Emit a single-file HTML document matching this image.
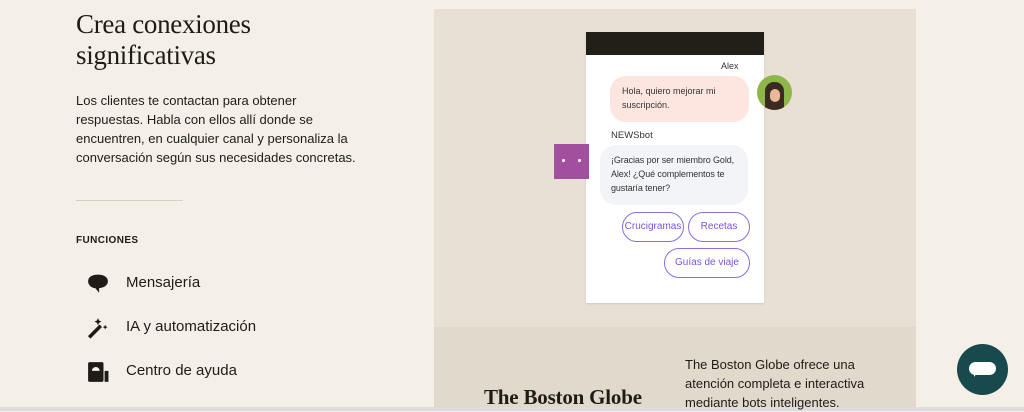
<!DOCTYPE html><html><head><style>
*{margin:0;padding:0;box-sizing:border-box}
body{width:1024px;height:411px;overflow:hidden;background:#f5f0e7;font-family:"Liberation Sans",sans-serif;color:#1f1c17;position:relative}
.a{position:absolute}
h1{font-family:"Liberation Serif",serif;font-weight:400;font-size:27px;line-height:31px;left:76px;top:9px;letter-spacing:-.3px}
.p{left:76px;top:91px;width:290px;font-size:13px;line-height:19px}
.it{left:126px;font-size:15px}
.bub{font-size:9px;line-height:14px;color:#333;border-radius:16px;padding:0 12px}
.btn{border:1.3px solid #8a6ee0;color:#7a55d8;border-radius:16px;font-size:10px;text-align:center;height:30px;line-height:28px}
</style></head><body>
<h1 class="a">Crea conexiones<br>significativas</h1>
<div class="a p">Los clientes te contactan para obtener respuestas. Habla con ellos allí donde se encuentren, en cualquier canal y personaliza la conversación según sus necesidades concretas.</div>
<div class="a" style="left:76px;top:200px;width:107px;height:1px;background:#d8d0c2"></div>
<div class="a" style="left:76px;top:235px;font-size:10px;font-weight:700;letter-spacing:.4px">FUNCIONES</div>
<svg class="a" style="left:87px;top:273px" width="22" height="22" viewBox="0 0 20 20"><path d="M10 1.5C4 1.5 1 4 1 7.5s3 6 6.5 6.3L11 18v-4.2c5-.5 8-3 8-6.3s-3-6-9-6z" fill="#1f1c17"/></svg>
<div class="a it" style="top:274px">Mensajería</div>
<svg class="a" style="left:87px;top:317px" width="22" height="22" viewBox="0 0 20 20"><path d="M2 18.5L12.5 8" stroke="#1f1c17" stroke-width="3.2"/><path d="M10 1l1 2.2 2.2 1-2.2 1L10 7.5l-1-2.3-2.2-1 2.2-1zM16.5 7l.7 1.5 1.5.7-1.5.7-.7 1.5-.7-1.5-1.5-.7 1.5-.7z" fill="#1f1c17"/></svg>
<div class="a it" style="top:318px">IA y automatización</div>
<svg class="a" style="left:87px;top:361px" width="22" height="22" viewBox="0 0 20 20"><rect x="1" y="1" width="14" height="18" rx="1.5" fill="#1f1c17"/><rect x="16" y="9" width="3.5" height="10" rx=".5" fill="#1f1c17"/><path d="M4.5 9a3.5 3.5 0 017 0z" fill="#f5f0e7"/></svg>
<div class="a it" style="top:362px">Centro de ayuda</div>

<div class="a" style="left:434px;top:9px;width:482px;height:318px;background:#e8e0d5"></div>
<div class="a" style="left:434px;top:327px;width:482px;height:80px;background:#e1d9cc"></div>
<div class="a" style="left:0;top:407px;width:1024px;height:4px;background:#dcdcdc"></div>

<div class="a" style="left:586px;top:32px;width:178px;height:271px;background:#fff;box-shadow:0 1px 2px rgba(0,0,0,.1)"></div>
<div class="a" style="left:586px;top:32px;width:178px;height:23px;background:#221f18"></div>
<div class="a" style="left:721px;top:61px;font-size:9px;color:#333">Alex</div>
<div class="a bub" style="left:610px;top:76px;width:139px;height:46px;background:#fde5e0;padding-top:8px;border-radius:16px">Hola, quiero mejorar mi suscripción.</div>
<div class="a" style="left:757px;top:75px;width:35px;height:35px;border-radius:50%;background:#8fb64a;overflow:hidden"><div style="margin:7px 0 0 8px;width:19px;height:28px;border-radius:9px 9px 0 0;background:#3a2a22"></div><div style="position:absolute;left:13px;top:14px;width:10px;height:13px;border-radius:5px;background:#e8b898"></div></div>
<div class="a" style="left:611px;top:130px;font-size:9.5px;color:#333">NEWSbot</div>
<div class="a" style="left:554px;top:144px;width:35px;height:35px;background:#a24f9f"><div style="position:absolute;left:8px;top:15px;width:3px;height:3px;background:#fff;border-radius:50%"></div><div style="position:absolute;left:24px;top:15px;width:3px;height:3px;background:#fff;border-radius:50%"></div></div>
<div class="a bub" style="left:600px;top:145px;width:148px;height:60px;background:#f3f4f8;padding:8px 6px 0 11px;letter-spacing:-.1px">¡Gracias por ser miembro Gold, Alex! ¿Qué complementos te gustaría tener?</div>
<div class="a btn" style="left:622px;top:212px;width:62px">Crucigramas</div>
<div class="a btn" style="left:688px;top:212px;width:62px">Recetas</div>
<div class="a btn" style="left:664px;top:248px;width:86px">Guías de viaje</div>

<div class="a" style="left:484px;top:385px;font-family:'Liberation Serif',serif;font-size:21px;font-weight:700;letter-spacing:-.2px">The Boston Globe</div>
<div class="a" style="left:685px;top:355px;width:200px;font-size:13px;line-height:19px">The Boston Globe ofrece una atención completa e interactiva mediante bots inteligentes.</div>
<div class="a" style="left:957px;top:344px;width:51px;height:51px;border-radius:50%;background:#17494d"></div>
<div class="a" style="left:969px;top:362px;width:27px;height:13px;border-radius:7px;background:#fff"></div>
<div class="a" style="left:974px;top:373px;width:0;height:0;border-left:3px solid #fff;border-bottom:4px solid transparent"></div>
</body></html>
